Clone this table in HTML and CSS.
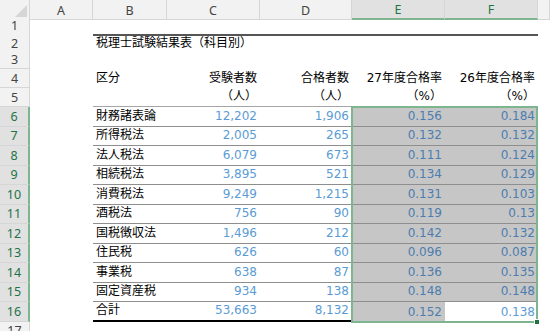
FILE: index.html
```html
<!DOCTYPE html>
<html lang="ja">
<head>
    <meta charset="UTF-8">
    <title>税理士試験結果表</title>
    <link rel="stylesheet" href="styles.css">
</head>
<body>
    <div class="sheet">
        <div class="row head-row">
            <div class="corner">
                <svg width="12" height="12" viewBox="0 0 12 12"><polygon points="12,0 12,12 0,12" fill="#d6d6d6"/></svg>
            </div>
            <div class="ch">A</div>
            <div class="ch">B</div>
            <div class="ch">C</div>
            <div class="ch">D</div>
            <div class="ch on">E</div>
            <div class="ch on">F</div>
            <div class="ch"></div>
        </div>

        <div class="row h17">
            <div class="rh">1</div>
            <div class="cell"></div><div class="cell"></div><div class="cell"></div>
            <div class="cell"></div><div class="cell"></div><div class="cell"></div><div class="cell"></div>
        </div>
        <div class="row h17">
            <div class="rh">2</div>
            <div class="cell"></div>
            <div class="cell rule">税理士試験結果表（科目別）</div>
            <div class="cell rule"></div><div class="cell rule"></div>
            <div class="cell rule"></div><div class="cell rule"></div><div class="cell"></div>
        </div>
        <div class="row h18">
            <div class="rh">3</div>
            <div class="cell"></div><div class="cell"></div><div class="cell"></div>
            <div class="cell"></div><div class="cell"></div><div class="cell"></div><div class="cell"></div>
        </div>
        <div class="row h19">
            <div class="rh">4</div>
            <div class="cell"></div>
            <div class="cell">区分</div>
            <div class="cell right">受験者数</div>
            <div class="cell right">合格者数</div>
            <div class="cell right">27年度合格率</div>
            <div class="cell right">26年度合格率</div>
            <div class="cell"></div>
        </div>
        <div class="row h19">
            <div class="rh">5</div>
            <div class="cell"></div>
            <div class="cell thin"></div>
            <div class="cell right thin">（人）</div>
            <div class="cell right thin">（人）</div>
            <div class="cell right thin">（%）</div>
            <div class="cell right thin">（%）</div>
            <div class="cell"></div>
        </div>

        <div class="row">
            <div class="rh on">6</div>
            <div class="cell"></div>
            <div class="cell line">財務諸表論</div>
            <div class="cell num line">12,202</div>
            <div class="cell num line">1,906</div>
            <div class="cell num line sel">0.156</div>
            <div class="cell num line sel">0.184</div>
            <div class="cell"></div>
        </div>
        <div class="row">
            <div class="rh on">7</div>
            <div class="cell"></div>
            <div class="cell line">所得税法</div>
            <div class="cell num line">2,005</div>
            <div class="cell num line">265</div>
            <div class="cell num line sel">0.132</div>
            <div class="cell num line sel">0.132</div>
            <div class="cell"></div>
        </div>
        <div class="row">
            <div class="rh on">8</div>
            <div class="cell"></div>
            <div class="cell line">法人税法</div>
            <div class="cell num line">6,079</div>
            <div class="cell num line">673</div>
            <div class="cell num line sel">0.111</div>
            <div class="cell num line sel">0.124</div>
            <div class="cell"></div>
        </div>
        <div class="row">
            <div class="rh on">9</div>
            <div class="cell"></div>
            <div class="cell line">相続税法</div>
            <div class="cell num line">3,895</div>
            <div class="cell num line">521</div>
            <div class="cell num line sel">0.134</div>
            <div class="cell num line sel">0.129</div>
            <div class="cell"></div>
        </div>
        <div class="row">
            <div class="rh on">10</div>
            <div class="cell"></div>
            <div class="cell line">消費税法</div>
            <div class="cell num line">9,249</div>
            <div class="cell num line">1,215</div>
            <div class="cell num line sel">0.131</div>
            <div class="cell num line sel">0.103</div>
            <div class="cell"></div>
        </div>
        <div class="row">
            <div class="rh on">11</div>
            <div class="cell"></div>
            <div class="cell line">酒税法</div>
            <div class="cell num line">756</div>
            <div class="cell num line">90</div>
            <div class="cell num line sel">0.119</div>
            <div class="cell num line sel">0.13</div>
            <div class="cell"></div>
        </div>
        <div class="row">
            <div class="rh on">12</div>
            <div class="cell"></div>
            <div class="cell line">国税徴収法</div>
            <div class="cell num line">1,496</div>
            <div class="cell num line">212</div>
            <div class="cell num line sel">0.142</div>
            <div class="cell num line sel">0.132</div>
            <div class="cell"></div>
        </div>
        <div class="row">
            <div class="rh on">13</div>
            <div class="cell"></div>
            <div class="cell line">住民税</div>
            <div class="cell num line">626</div>
            <div class="cell num line">60</div>
            <div class="cell num line sel">0.096</div>
            <div class="cell num line sel">0.087</div>
            <div class="cell"></div>
        </div>
        <div class="row">
            <div class="rh on">14</div>
            <div class="cell"></div>
            <div class="cell line">事業税</div>
            <div class="cell num line">638</div>
            <div class="cell num line">87</div>
            <div class="cell num line sel">0.136</div>
            <div class="cell num line sel">0.135</div>
            <div class="cell"></div>
        </div>
        <div class="row">
            <div class="rh on">15</div>
            <div class="cell"></div>
            <div class="cell line">固定資産税</div>
            <div class="cell num line">934</div>
            <div class="cell num line">138</div>
            <div class="cell num line sel">0.148</div>
            <div class="cell num line sel">0.148</div>
            <div class="cell"></div>
        </div>
        <div class="row">
            <div class="rh on">16</div>
            <div class="cell"></div>
            <div class="cell total">合計</div>
            <div class="cell num total">53,663</div>
            <div class="cell num total">8,132</div>
            <div class="cell num sel">0.152</div>
            <div class="cell num">0.138</div>
            <div class="cell"></div>
        </div>
        <div class="row">
            <div class="rh">17</div>
            <div class="cell"></div><div class="cell"></div><div class="cell"></div>
            <div class="cell"></div><div class="cell"></div><div class="cell"></div><div class="cell"></div>
        </div>

        <!-- selected range E6:F16 -->
        <div class="selection"><span class="handle"></span></div>
    </div>
</body>
</html>
```

FILE: styles.css
```css
:root {
    --header-bg: #f2f2f2;
    --header-line: #d6d6d6;
    --header-on: #e1e1e1;
    --green: #217346;
    --select-line: #7db58e;
    --num-color: #5b9bd5;
}

* {
    margin: 0;
    padding: 0;
    box-sizing: border-box;
}

body {
    font-family: "DejaVu Sans", "Noto Sans CJK JP", sans-serif;
    font-size: 12px;
    color: #000;
    background: #fff;
    width: 550px;
    height: 331px;
    overflow: hidden;
}

.sheet {
    position: relative;
}

.row {
    display: grid;
    grid-template-columns: 30px 63px 74px 93px 92px 93px 93px 12px;
    height: 19.5px;
}

.head-row { height: 17px; }
.h17 { height: 17px; }
.h18 { height: 18px; }
.h19 { height: 19px; }

.corner {
    background: var(--header-bg);
    border-right: 1px solid var(--header-line);
    border-bottom: 1px solid var(--header-line);
    display: flex;
    align-items: flex-end;
    justify-content: flex-end;
    padding: 0 2px 2px 0;
}

.ch,
.rh {
    background: var(--header-bg);
    font-family: "Noto Sans", sans-serif;
    font-size: 12.5px;
    color: #444;
    display: flex;
    align-items: center;
    justify-content: center;
    border-bottom: 1px solid var(--header-line);
}

.ch {
    border-right: 1px solid var(--header-line);
    padding-top: 1px;
}

.ch.on {
    background: var(--header-on);
    color: var(--green);
    border-bottom: 2px solid var(--select-line);
}

.rh {
    border-right: 1px solid var(--header-line);
}

.rh.on {
    background: var(--header-on);
    color: var(--green);
    border-right: 2px solid var(--select-line);
}

.cell {
    display: flex;
    align-items: flex-end;
    padding: 0 3px 3px;
    line-height: 14px;
    white-space: nowrap;
}

.right,
.num {
    justify-content: flex-end;
}

.num {
    color: var(--num-color);
}

.rule {
    border-top: 2px solid #555;
}

.thin {
    border-bottom: 1px solid #a6a6a6;
}

.line {
    border-bottom: 1px solid #8e8e8e;
}

.total {
    border-bottom: 2px solid #000;
}

.sel {
    background: #c6c6c6;
    color: #4c7db0;
}

.selection {
    position: absolute;
    left: 351px;
    top: 106px;
    width: 187px;
    height: 217px;
    border: 2px solid var(--select-line);
}

.handle {
    position: absolute;
    right: -4px;
    bottom: -4px;
    width: 6px;
    height: 6px;
    background: var(--green);
    border: 1px solid #fff;
}
```
